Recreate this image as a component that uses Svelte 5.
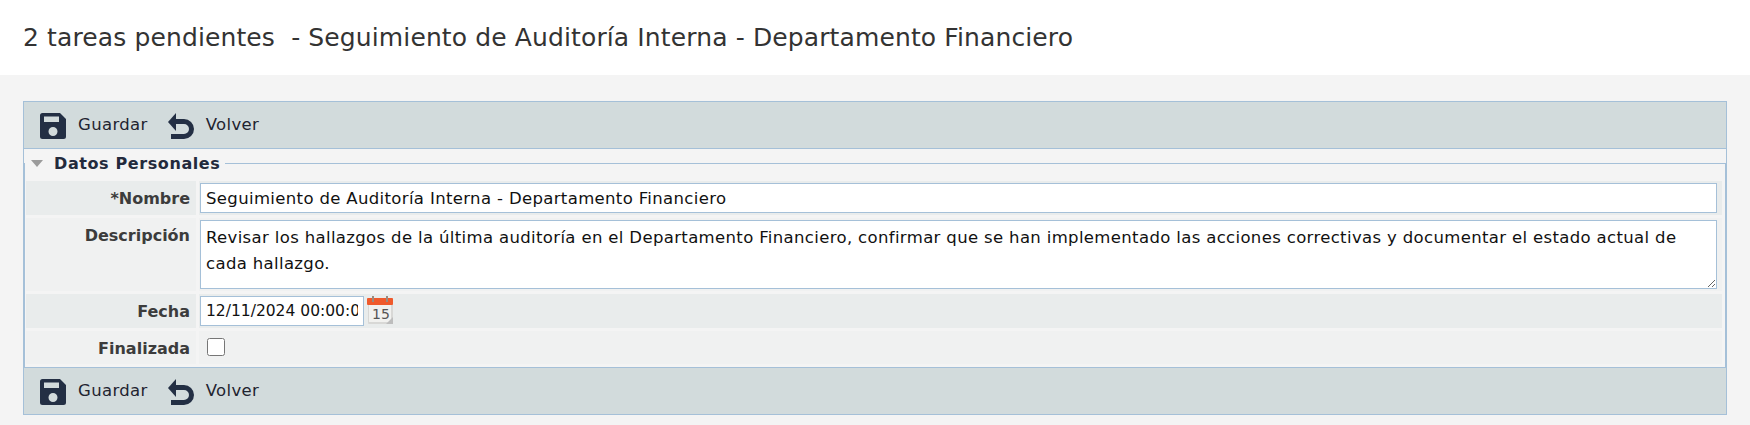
<script>
  let rows = { nombre: 'Seguimiento de Auditoría Interna - Departamento Financiero' };
  const descripcion = 'Revisar los hallazgos de la última auditoría en el Departamento Financiero, confirmar que se han implementado las acciones correctivas y documentar el estado actual de cada hallazgo.';
</script>

{#snippet toolbar()}
  <div class="toolbar">
    <button class="tool">
      <svg class="icon" viewBox="0 0 26 26" aria-hidden="true">
        <path fill="#232f44" d="M2.500 0H20l6 6v17.500a2.500 2.500 0 0 1-2.500 2.500H2.500A2.500 2.500 0 0 1 0 23.500V2.500A2.500 2.500 0 0 1 2.500 0zM4 3.500V9h15V3.500zM13 14a4.500 4.500 0 1 0 0 9 4.500 4.500 0 0 0 0-9z" fill-rule="evenodd"/>
      </svg>
      <span class="tool-text">Guardar</span>
    </button>
    <button class="tool">
      <svg class="icon" viewBox="0 0 26 26" aria-hidden="true">
        <path fill="none" stroke="#232f44" stroke-width="5" d="M7 8.500h9a7.500 7.500 0 0 1 0 15H3"/>
        <path fill="#232f44" d="M8 0v18L0 9z"/>
      </svg>
      <span class="tool-text">Volver</span>
    </button>
  </div>
{/snippet}

<header class="title">2 tareas pendientes&nbsp; - Seguimiento de Auditoría Interna - Departamento Financiero</header>

<main class="page">
  {@render toolbar()}
  <section class="fields">
    <div class="legend">
      <span class="arrow"></span>
      <span class="legend-text">Datos Personales</span>
    </div>
    <div class="grid">
      <div class="label odd">*Nombre</div>
      <div class="value odd"><input class="text" value={rows.nombre} /></div>
      <div class="label">Descripción</div>
      <div class="value"><textarea class="area">{descripcion}</textarea></div>
      <div class="label odd">Fecha</div>
      <div class="value odd date">
        <input class="text datebox" value="12/11/2024 00:00:00" />
        <svg class="cal" viewBox="0 0 26 29" aria-hidden="true">
          <rect x="1" y="2" width="25" height="26" rx="1" fill="#d8d8d6"/>
          <rect x="2" y="9" width="22" height="17" fill="#f1f1ef"/>
          <rect x="0" y="2" width="26" height="7" rx="1" fill="#ef5a2c"/>
          <rect x="5" y="0" width="2" height="6" fill="#9a8a80"/>
          <rect x="19" y="0" width="2" height="6" fill="#9a8a80"/>
          <path d="M19 28l7-7v7z" fill="#bdbdbd"/>
          <text x="5" y="23" class="cal-num">15</text>
        </svg>
      </div>
      <div class="label">Finalizada</div>
      <div class="value"><input class="check" type="checkbox" /></div>
    </div>
  </section>
  {@render toolbar()}
</main>

<style>
  :global(body) {
    margin: 0;
    background: #f4f4f4;
    font-family: "DejaVu Sans", "Liberation Sans", sans-serif;
    color: #333;
  }

  .title {
    height: 75px;
    box-sizing: border-box;
    padding: 23px 23px 0;
    background: #fff;
    font-size: 25px;
    letter-spacing: 0.12px;
    line-height: 30px;
    color: #333;
  }

  .page {
    padding: 26px 23px 9px 23px;
  }

  .toolbar {
    display: flex;
    align-items: center;
    gap: 20px;
    height: 48px;
    box-sizing: border-box;
    padding: 2px 16px 0;
    background: #d2dbdc;
    border: 1px solid #a5c0d8;
  }

  .tool {
    display: flex;
    align-items: center;
    gap: 12px;
    padding: 0;
    border: 0;
    background: none;
    font: inherit;
    font-size: 16.500px;
    letter-spacing: 0.35px;
    color: #1f2430;
  }

  .tool-text {
    padding-bottom: 4px;
  }

  .icon {
    width: 26px;
    height: 26px;
  }

  .fields {
    position: relative;
    height: 218px;
    box-sizing: border-box;
    padding: 32px 4px 0 2px;
    border: solid #a5c0d8;
    border-width: 0 1px;
  }

  .fields::before {
    content: '';
    position: absolute;
    inset: 14px 0 0 0;
    border: solid #a5c0d8;
    border-width: 1px 1px 0 1px;
  }

  .legend {
    position: absolute;
    top: 2px;
    left: 1px;
    display: flex;
    align-items: center;
    gap: 11px;
    padding: 0 5px 0 6px;
    height: 24px;
    background: #f4f4f4;
  }

  .arrow {
    width: 0;
    height: 0;
    border: 6px solid transparent;
    border-top: 7px solid #9b9b9b;
    border-bottom: 0;
  }

  .legend-text {
    font-size: 16px;
    letter-spacing: 0.6px;
    font-weight: 700;
    color: #232a3c;
  }

  .grid {
    position: relative;
    display: grid;
    grid-template-columns: 170px 1fr;
    grid-template-rows: 34px 73px 34px 33px;
    gap: 3px;
  }

  .label {
    display: flex;
    justify-content: flex-end;
    align-items: flex-start;
    padding: 7px 6px 0 0;
    background: #f0f1f1;
    font-size: 16px;
    line-height: 22px;
    font-weight: 700;
    color: #3c3c3c;
  }

  .value {
    padding: 2px 5px 0 1px;
    background: #f0f1f1;
  }

  .odd {
    background: #e9ecec;
  }

  .text, .area {
    display: block;
    box-sizing: border-box;
    width: 100%;
    height: 30px;
    padding: 0 5px;
    border: 1px solid #a5c0d8;
    background: #fff;
    font: inherit;
    font-size: 16.500px;
    letter-spacing: 0.35px;
    color: #111;
    outline: none;
  }

  .area {
    height: 69px;
    padding: 4px 5px;
    line-height: 26px;
  }

  .date {
    display: flex;
    align-items: flex-start;
    gap: 3px;
  }

  .datebox {
    width: 164px;
    font-size: 15.500px;
    letter-spacing: 0;
  }

  .cal {
    width: 26px;
    height: 29px;
  }

  .cal-num {
    font-size: 14px;
    fill: #555;
  }

  .check {
    width: 18px;
    height: 18px;
    margin: 5px 0 0 7px;
    accent-color: #666;
  }
</style>
